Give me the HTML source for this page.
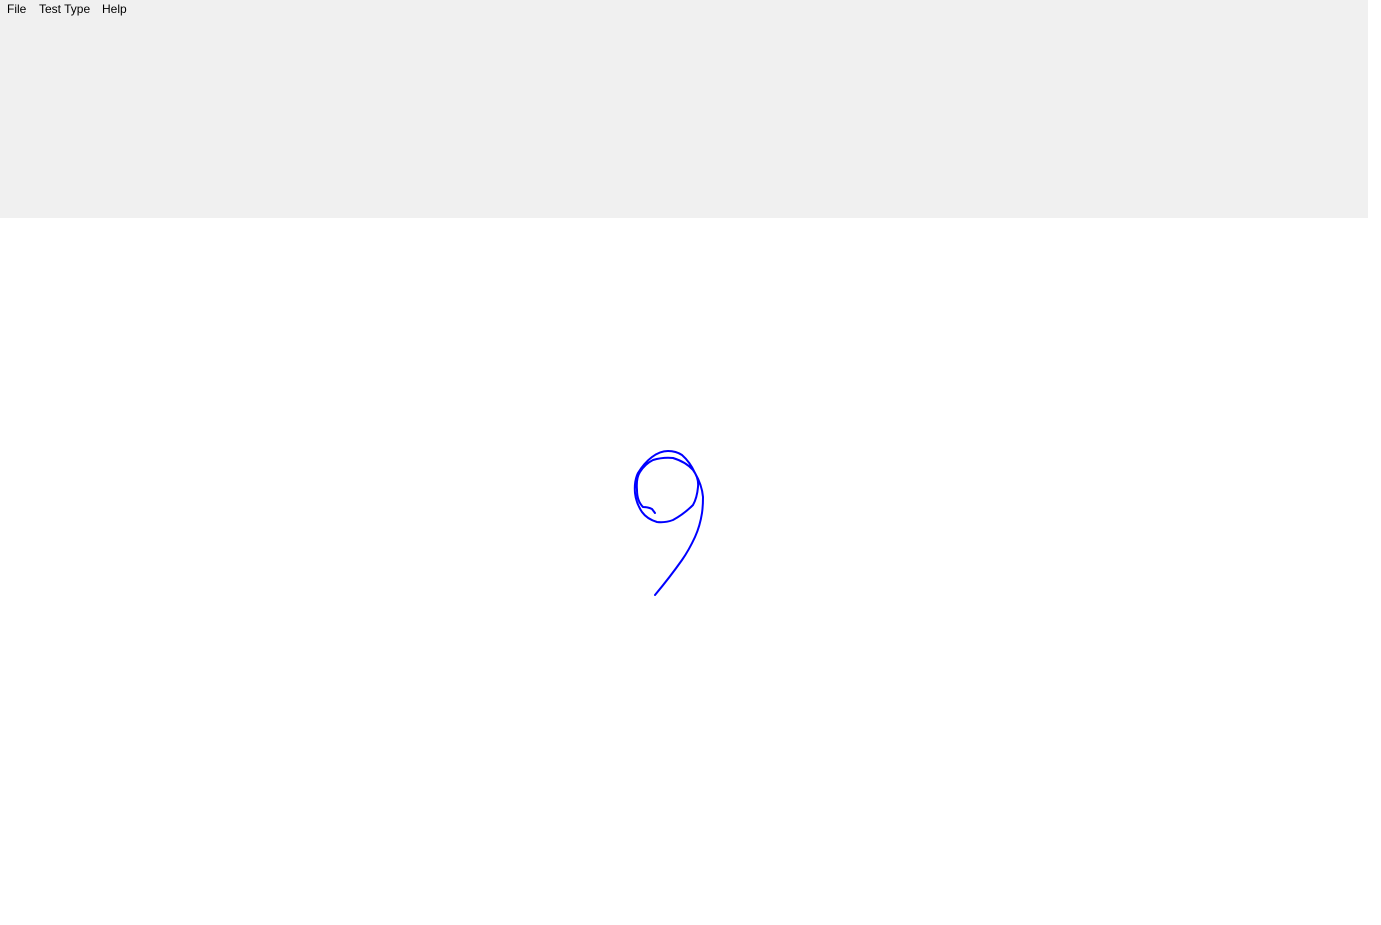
<!DOCTYPE html>
<html><head><meta charset="utf-8"><style>
html,body{margin:0;padding:0;width:1381px;height:925px;background:#fff;overflow:hidden;font-family:"Segoe UI","Liberation Sans",sans-serif;}
.top{position:absolute;left:0;top:0;width:1368px;height:218px;background:#f0f0f0;}
.menu{position:absolute;top:2px;font-size:12px;color:#000;}
svg{position:absolute;left:0;top:0;}
</style></head><body>
<div class="top"></div>
<span class="menu" style="left:7px">File</span>
<span class="menu" style="left:39px">Test Type</span>
<span class="menu" style="left:102px">Help</span>
<svg width="1381" height="925"><path d="M655,513 L652,509 Q648,507 643,507 Q637,501 637,490 Q636,478 640,472 Q645,464 653,460 Q663,457 673,458 Q686,462 693,470 Q699,478 698,487 Q697,498 693,505 Q684,514 673,520 Q665,523 657,522 Q647,519 642,512 Q636,503 635,493 Q634,481 638,473 Q644,463 652,457 Q660,451 668,451 Q676,451 682,455 Q690,462 695,473 Q702,485 703,497 Q703,506 702,513 Q700,526 695,537 Q689,550 682,560 Q670,577 655,595" fill="none" stroke="#0000ff" stroke-width="2" stroke-linejoin="round" stroke-linecap="round"/></svg>
</body></html>
